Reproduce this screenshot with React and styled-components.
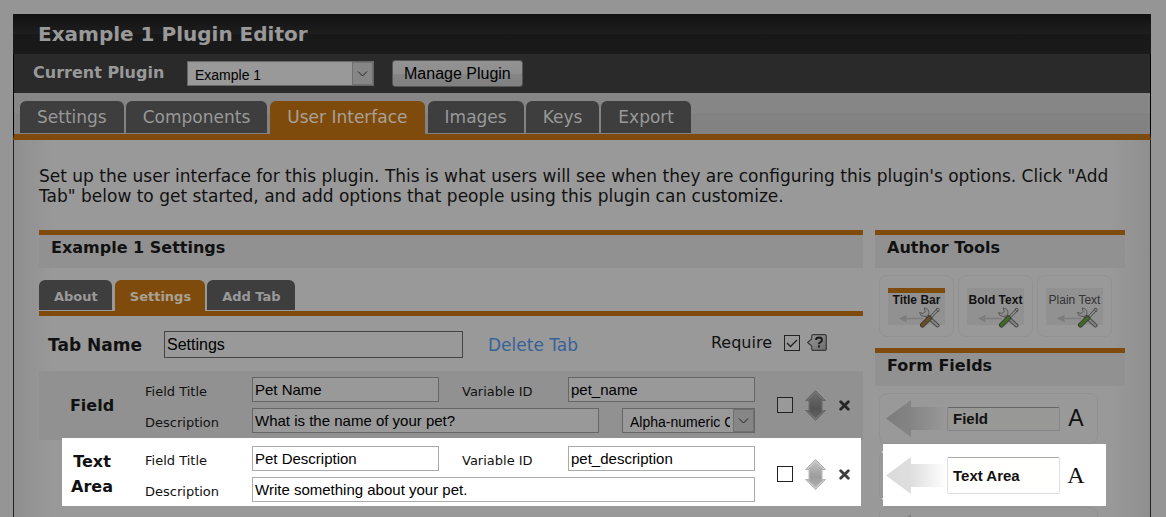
import React from "react";
import styled, { createGlobalStyle, css } from "styled-components";

const ui = '"DejaVu Sans", Verdana, sans-serif';
const form = '"Liberation Sans", Arial, sans-serif';
const orange = "#7f4b0c";

const Global = createGlobalStyle`
  *, *::before, *::after { box-sizing: border-box; }
  body { margin: 0; background: #959595; font-family: ${ui}; color: #111; }
  h1, h2, p { margin: 0; }
  button { cursor: pointer; }
`;

const Page = styled.div`
  height: 100vh;
  overflow: hidden;
  padding: 14px 15px 0 13px;
`;

const Title = styled.h1`
  height: 40px;
  padding: 0 25px;
  font-size: 20px;
  line-height: 41px;
  color: #999;
  background: linear-gradient(#111 0, #1e1e1e 20px, #181818 20px, #1a1a1a 40px);
`;

const PluginBar = styled.div`
  display: flex;
  align-items: center;
  height: 39px;
  padding: 0 19px;
  background: #2a2a2a;
  border: solid #000;
  border-width: 0 1px;
`;

const PluginLabel = styled.label`
  width: 154px;
  padding-bottom: 2px;
  font-size: 16px;
  line-height: 20px;
  font-weight: bold;
  color: #999;
`;

const SelectBox = styled.div`
  position: relative;
  display: flex;
  flex: 0 0 ${(p) => p.$width}px;
  height: 25px;

  svg {
    position: absolute;
    right: 1px;
    top: 1px;
    pointer-events: none;
  }
`;

const Select = styled.select`
  appearance: none;
  width: 100%;
  margin: 0;
  padding: 2px 24px 0 7px;
  border: 1px solid #666;
  border-radius: 0;
  outline: 0;
  background: #999;
  color: #000;
  font: 14px ${form};
`;

const ManageButton = styled.button`
  height: 27px;
  margin-left: 18px;
  padding: 0 11px;
  border: 1px solid #555;
  border-radius: 3px;
  color: #000;
  font: 16px ${form};
  background: linear-gradient(#929292 0, #8e8e8e 50%, #858585 50%, #808080 100%);
`;

const TabStrip = styled.nav`
  display: flex;
  align-items: flex-start;
  gap: 2px;
  height: 47px;
  padding: 8px 6px 0;
  border: solid #000;
  border-width: 0 1px;
  border-bottom: 6px solid ${orange};
  background: linear-gradient(#868686 20px, #828282 20px);
`;

const tab = css`
  display: block;
  color: ${(p) => (p.$active ? "#a9a196" : "#999")};
  background: ${(p) => (p.$active ? orange : "#3e3e3e")};
  border-radius: 6px 6px 0 0;
  text-decoration: none;
  white-space: nowrap;
`;

const Tab = styled.a`
  ${tab}
  height: ${(p) => (p.$active ? 33 : 32)}px;
  margin: 0 ${(p) => (p.$active ? 1 : 0)}px;
  padding: 0 17px;
  font-size: 17px;
  line-height: 32px;
`;

const Body = styled.main`
  padding: 26px 25px 0;
  border: solid #222;
  border-width: 0 1px;
  background: linear-gradient(90deg, #8f8f8f, #999 40px, #999 calc(100% - 40px), #8f8f8f);
`;

const Intro = styled.p`
  font-size: 17px;
  line-height: 20px;
`;

const Columns = styled.div`
  display: grid;
  grid-template-columns: minmax(0, 1fr) 250px;
  gap: 12px;
  margin-top: 24px;
`;

const SectionTitle = styled.h2`
  height: 38px;
  padding: 0 12px;
  border-top: 5px solid ${orange};
  background: #919191;
  font-size: 16px;
  line-height: 26px;
`;

const SubTabs = styled.nav`
  display: flex;
  align-items: flex-start;
  gap: 2px;
  height: 36px;
  margin-top: 12px;
  border-bottom: 5px solid ${orange};
`;

const SubTab = styled.a`
  ${tab}
  height: ${(p) => (p.$active ? 31 : 30)}px;
  margin-left: ${(p) => (p.$active ? 1 : 0)}px;
  padding: 0 14px 0 15px;
  font-size: 13px;
  font-weight: bold;
  line-height: 33px;
`;

const TabForm = styled.div`
  display: flex;
  align-items: center;
  height: 55px;
  padding: 2px 36px 0 9px;
`;

const TabNameLabel = styled.label`
  width: 116px;
  font-size: 17px;
  font-weight: bold;
`;

const TextInput = styled.input`
  flex: 1;
  min-width: 0;
  height: 25px;
  margin: 0;
  padding: 0 2px;
  border: 1px solid ${(p) => (p.$lit ? "#aaa" : "#666")};
  border-radius: 0;
  outline: 0;
  background: ${(p) => (p.$lit ? "#fff" : "#999")};
  color: #000;
  font: 15px ${form};
`;

const TabNameInput = styled(TextInput)`
  flex: 0 1 299px;
  height: 27px;
  border-color: #444;
  font-size: 16px;
`;

const DeleteLink = styled.a`
  margin-left: 25px;
  color: #376297;
  font-size: 17px;
  text-decoration: none;
`;

const Require = styled.div`
  display: flex;
  align-items: center;
  margin-left: auto;
  padding-bottom: 4px;
  font-size: 16px;

  label { margin-right: 12px; }
  svg { margin-left: 7px; }
`;

const CheckBox = styled.input`
  appearance: none;
  flex: none;
  width: 16px;
  height: 16px;
  margin: 0;
  border: 1px solid #222;
  background: ${(p) => (p.$lit ? "#fff" : "#999")};

  &:checked {
    background: #999 url("data:image/svg+xml,%3Csvg xmlns='http://www.w3.org/2000/svg' viewBox='0 0 14 14'%3E%3Cpath d='M2 7l3.5 3.5L12 4' fill='none' stroke='%23222' stroke-width='1.3'/%3E%3C/svg%3E");
  }
`;

const Row = styled.div`
  position: relative;
  z-index: 0;
  display: flex;
  align-items: center;
  padding: 6px 13px 7px 23px;
  background: ${(p) => (p.$lit ? "transparent" : "#919191")};

  ${(p) => p.$lit && css`
    &::before {
      content: "";
      position: absolute;
      z-index: -1;
      inset: -2px 2px 3px 23px;
      background: #fff;
    }
  `}
`;

const Kind = styled.div`
  flex: none;
  width: 60px;
  margin-right: 23px;
  font-size: 16px;
  font-weight: bold;
  line-height: 25px;
  text-align: center;
`;

const Fields = styled.div`
  display: grid;
  grid-template-columns: minmax(0, 1fr);
  flex: 1;
  min-width: 0;
  gap: 6px;
`;

const Line = styled.div`
  display: flex;
  height: 25px;
`;

const FieldLabel = styled.label`
  flex: 0 0 ${(p) => (p.$second ? 106 : 107)}px;
  margin-left: ${(p) => (p.$second ? 23 : 0)}px;
  padding-top: 2px;
  font-size: 13px;
  line-height: 25px;
`;

const Spacer = styled.span`
  flex: 0 0 23px;
`;

const Actions = styled.div`
  display: flex;
  flex: none;
  align-items: center;
  margin-left: 22px;
`;

const IconButton = styled.button`
  display: flex;
  margin: 0 0 0 ${(p) => p.$gap}px;
  padding: 0;
  border: 0;
  background: none;
`;

const Tools = styled.div`
  display: flex;
  gap: 4px;
  margin: 7px 0 11px;
  padding-left: 4px;
`;

const card = css`
  border: 1px solid #929292;
  border-radius: 8px;
  background: none;
  font-family: ${form};
`;

const Tool = styled.button`
  ${card}
  width: 75px;
  height: 62px;
  padding: 9px 8px;
`;

const ToolFace = styled.span`
  position: relative;
  display: block;
  height: 37px;
  border-top: 5px solid ${(p) => (p.$bar ? orange : "#919191")};
  background: #919191;
  color: ${(p) => (p.$plain ? "#333" : "#111")};
  font-size: 12px;
  font-weight: ${(p) => (p.$plain ? "normal" : "bold")};
  line-height: 15px;
  white-space: nowrap;

  span { display: flex; justify-content: center; }
  svg { position: absolute; left: 10px; top: 14px; }
`;

const Palette = styled.div`
  display: grid;
  gap: 6px;
  padding: 7px 27px 0 4px;
`;

const PaletteItem = styled.button`
  ${card}
  position: relative;
  z-index: 0;
  display: flex;
  align-items: center;
  height: 51px;
  padding: 0 5px 0 6px;
  ${(p) => p.$lit && css`
    border-color: #eee #eee #eee #929292;

    &::before {
      content: "";
      position: absolute;
      z-index: -1;
      inset: -7px -9px -6px 3px;
      background: #fff;
    }
  `}
`;

const Sample = styled.span`
  display: flex;
  align-items: center;
  flex: 1;
  height: ${(p) => (p.$lit ? 37 : 24)}px;
  padding-left: 5px;
  border: 1px solid ${(p) => (p.$lit ? "#dde0e8" : "#84868b")};
  border-top-color: ${(p) => (p.$lit ? "#aaa" : "#666")};
  border-radius: 2px;
  background: ${(p) => (p.$lit ? "#fffffd" : "#989896")};
  color: #111;
  font-size: 15px;
  font-weight: bold;
`;

const Letter = styled.span`
  width: 32px;
  color: #111;
  font: ${(p) => (p.$serif ? '24px "Liberation Serif", serif' : `23px ${form}`)};
  text-align: center;
`;

const Chevron = () => (
  <svg width="21" height="23" viewBox="0 0 21 23" aria-hidden="true">
    <path d="M0 0h21v23H0z" fill="#868686" />
    <path d="M.5.5h20v22H.5z" fill="none" stroke="#707070" />
    <path d="M6 9.500l4.500 4.500 4.500-4.500" fill="none" stroke="#222" />
  </svg>
);

const HelpIcon = () => (
  <svg width="20" height="17" viewBox="0 0 20 17" role="img" aria-label="Help">
    <defs>
      <linearGradient id="help" x2="1" y2="1">
        <stop stopColor="#999" />
        <stop offset="1" stopColor="#6c6c6c" />
      </linearGradient>
    </defs>
    <path d="M6 .7h12q1.300 0 1.300 1.300v13q0 1.300-1.300 1.300H6q-1.300 0-1.300-1.300v-3L.7 8.500 4.700 5V2Q4.700.7 6 .7z" fill="url(#help)" stroke="#3a3a3a" strokeWidth="1.2" />
    <path d="M9 6q.2-2.500 3-2.500T15 6q0 1.500-1.500 2.200T12 10.200M12 11.600v2" fill="none" stroke="#1c1c1c" strokeWidth="2" />
  </svg>
);

const MoveIcon = ({ lit }) => {
  const id = lit ? "move-lit" : "move-dim";
  return (
    <svg width="21" height="31" viewBox="0 0 21 31" aria-hidden="true">
      <defs>
        <linearGradient id={id} x2="0" y2="1">
          <stop stopColor={lit ? "#c0c0c0" : "#6c6c6c"} />
          <stop offset=".6" stopColor={lit ? "#9c9c9c" : "#545454"} />
          <stop offset="1" stopColor={lit ? "#b0b0b0" : "#626262"} />
        </linearGradient>
      </defs>
      <path d="M10.500.5L20.500 10.500H17v10h3.500L10.500 30.500.5 20.500H4v-10H.5z" fill={lit ? "#cacaca" : "#747474"} stroke={lit ? "#b4b4b4" : "#686868"} />
      <path d="M10.500 3L18 10H16.500v11H18L10.500 28 3 21h1.500v-11H3z" fill={`url(#${id})`} />
    </svg>
  );
};

const RemoveIcon = ({ lit }) => (
  <svg width="11" height="11" viewBox="0 0 11 11" aria-hidden="true">
    <path d="M1.700 1.700l7.600 7.600M9.300 1.700L1.700 9.300" stroke={lit ? "#3c3c3c" : "#262626"} strokeWidth="2.800" strokeLinecap="round" />
  </svg>
);

const ToolIcon = ({ handle }) => (
  <svg width="42" height="21" viewBox="0 0 42 21" aria-hidden="true">
    <path d="M1 11.500L9 7.500 8 10.700H25v1.600H8L9 15.500z" fill="#7c7c7c" />
    <path d="M28 8L39.500 18.500" stroke="#484848" strokeWidth="4" strokeLinecap="round" />
    <path d="M28 8L39.500 18.500" stroke="#858585" strokeWidth="2" strokeLinecap="round" />
    <path d="M26 1Q31 1.500 31 5.500T26 9.500Q22 9.300 21.500 5.500L25 6.500 27.300 4.500z" fill="#8c8c8c" stroke="#5a5a5a" />
    <path d="M39.500 3L32 11" stroke="#4c4c4c" strokeWidth="3" />
    <path d="M39.500 3L32 11" stroke="#949494" strokeWidth="1.200" />
    <path d="M38 2l2-1 1.300 1.500L40 5z" fill="#888" stroke="#505050" />
    <path d="M31.500 11L24.500 18" stroke="#38382e" strokeWidth="5" strokeLinecap="round" />
    <path d="M31.500 11L24.500 18" stroke={handle} strokeWidth="3.200" strokeLinecap="round" />
  </svg>
);

const PaletteArrow = ({ lit }) => {
  const id = lit ? "arrow-lit" : "arrow-dim";
  return (
    <svg width="61" height="37" viewBox="0 0 61 37" aria-hidden="true">
      <defs>
        <linearGradient id={id}>
          <stop stopColor={lit ? "#dadada" : "#7c7c7c"} />
          <stop offset=".4" stopColor={lit ? "#dedede" : "#848484"} />
          <stop offset="1" stopColor={lit ? "#fff" : "#999"} />
        </linearGradient>
      </defs>
      <path d="M0 18.500L25 0v7h36v23H25v7z" fill={`url(#${id})`} />
    </svg>
  );
};

function FieldRow({ id, kind, title, variable, description, format, lit }) {
  return (
    <Row $lit={lit}>
      <Kind>{kind}</Kind>
      <Fields>
        <Line>
          <FieldLabel htmlFor={`${id}-title`}>Field Title</FieldLabel>
          <TextInput id={`${id}-title`} defaultValue={title} $lit={lit} />
          <FieldLabel htmlFor={`${id}-var`} $second>Variable ID</FieldLabel>
          <TextInput id={`${id}-var`} defaultValue={variable} $lit={lit} />
        </Line>
        <Line>
          <FieldLabel htmlFor={`${id}-desc`}>Description</FieldLabel>
          <TextInput id={`${id}-desc`} defaultValue={description} $lit={lit} />
          {format && (
            <>
              <Spacer />
              <SelectBox $width={133}>
                <Select aria-label="Format"><option>{format}</option></Select>
                <Chevron />
              </SelectBox>
            </>
          )}
        </Line>
      </Fields>
      <Actions>
        <CheckBox type="checkbox" aria-label={`Select ${kind}`} $lit={lit} />
        <IconButton $gap={12} aria-label="Move"><MoveIcon lit={lit} /></IconButton>
        <IconButton $gap={13} aria-label="Remove"><RemoveIcon lit={lit} /></IconButton>
      </Actions>
    </Row>
  );
}

const tabs = ["Settings", "Components", "User Interface", "Images", "Keys", "Export"];
const subTabs = ["About", "Settings", "Add Tab"];

export default function App() {
  return (
    <Page>
      <Global />
      <Title>Example 1 Plugin Editor</Title>
      <PluginBar>
        <PluginLabel htmlFor="plugin">Current Plugin</PluginLabel>
        <SelectBox $width={187}>
          <Select id="plugin"><option>Example 1</option></Select>
          <Chevron />
        </SelectBox>
        <ManageButton>Manage Plugin</ManageButton>
      </PluginBar>
      <TabStrip>
        {tabs.map((t) => <Tab key={t} href="#" $active={t === "User Interface"}>{t}</Tab>)}
      </TabStrip>
      <Body>
        <Intro>
          Set up the user interface for this plugin. This is what users will see when they are configuring this plugin's options. Click "Add Tab" below to get started, and add options that people using this plugin can customize.
        </Intro>
        <Columns>
          <section>
            <SectionTitle>Example 1 Settings</SectionTitle>
            <SubTabs>
              {subTabs.map((t) => <SubTab key={t} href="#" $active={t === "Settings"}>{t}</SubTab>)}
            </SubTabs>
            <TabForm>
              <TabNameLabel htmlFor="tab-name">Tab Name</TabNameLabel>
              <TabNameInput id="tab-name" defaultValue="Settings" />
              <DeleteLink href="#">Delete Tab</DeleteLink>
              <Require>
                <label htmlFor="require">Require</label>
                <CheckBox id="require" type="checkbox" defaultChecked />
                <HelpIcon />
              </Require>
            </TabForm>
            <FieldRow id="name" kind="Field" title="Pet Name" variable="pet_name" description="What is the name of your pet?" format="Alpha-numeric Characters" />
            <FieldRow id="desc" kind="Text Area" title="Pet Description" variable="pet_description" description="Write something about your pet." lit />
          </section>
          <aside>
            <SectionTitle>Author Tools</SectionTitle>
            <Tools>
              <Tool><ToolFace $bar><span>Title Bar</span><ToolIcon handle="#6b4c2c" /></ToolFace></Tool>
              <Tool><ToolFace><span>Bold Text</span><ToolIcon handle="#41692a" /></ToolFace></Tool>
              <Tool><ToolFace $plain><span>Plain Text</span><ToolIcon handle="#41692a" /></ToolFace></Tool>
            </Tools>
            <SectionTitle>Form Fields</SectionTitle>
            <Palette>
              <PaletteItem>
                <PaletteArrow />
                <Sample>Field</Sample>
                <Letter>A</Letter>
              </PaletteItem>
              <PaletteItem $lit>
                <PaletteArrow lit />
                <Sample $lit>Text Area</Sample>
                <Letter $serif>A</Letter>
              </PaletteItem>
              <PaletteItem aria-label="More fields">
                <PaletteArrow />
              </PaletteItem>
            </Palette>
          </aside>
        </Columns>
      </Body>
    </Page>
  );
}
